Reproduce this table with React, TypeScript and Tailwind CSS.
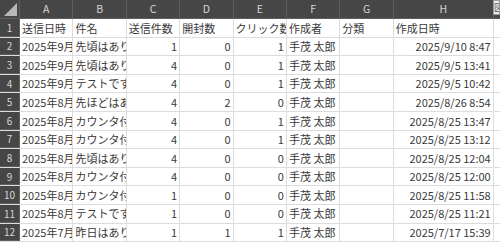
const cols = ['A', 'B', 'C', 'D', 'E', 'F', 'G', 'H'];

type Row = {
	sent: string;
	subject: string;
	count: string;
	opened: string;
	clicks: string;
	author: string;
	category: string;
	created: string;
};

const header: Row = {
	sent: '送信日時',
	subject: '件名',
	count: '送信件数',
	opened: '開封数',
	clicks: 'クリック数',
	author: '作成者',
	category: '分類',
	created: '作成日時'
};

// only the part that shows inside the narrow columns
const rows: Row[] = [
	['2025年9月', '先頃はあり', '1', '0', '1', '2025/9/10 8:47'],
	['2025年9月', '先頃はあり', '4', '0', '1', '2025/9/5 13:41'],
	['2025年9月', 'テストです', '4', '0', '1', '2025/9/5 10:42'],
	['2025年8月', '先ほどはあ', '4', '2', '0', '2025/8/26 8:54'],
	['2025年8月', 'カウンタ付', '4', '0', '1', '2025/8/25 13:47'],
	['2025年8月', 'カウンタ付', '4', '0', '1', '2025/8/25 13:12'],
	['2025年8月', '先頃はあり', '4', '0', '0', '2025/8/25 12:04'],
	['2025年8月', 'カウンタ付', '4', '0', '0', '2025/8/25 12:00'],
	['2025年8月', 'カウンタ付', '1', '0', '0', '2025/8/25 11:58'],
	['2025年8月', 'テストです', '1', '0', '0', '2025/8/25 11:21'],
	['2025年7月', '昨日はあり', '1', '1', '1', '2025/7/17 15:39']
].map(([sent, subject, count, opened, clicks, created]) => ({
	sent,
	subject,
	count,
	opened,
	clicks,
	author: '手茂 太郎',
	category: '',
	created
}));

function Cell({ text, right, wide }: { text: string; right?: boolean; wide?: boolean }) {
	return (
		<div
			className={`${wide ? 'w-[100px]' : 'w-[53.4px]'} shrink-0 h-full border-r border-[#dcdcdc] flex items-center ${right ? 'justify-end' : 'justify-start'}`}
		>
			<span className="block min-w-0 max-w-full overflow-hidden whitespace-nowrap px-[2px]">{text}</span>
		</div>
	);
}

function SheetRow({ n, row, isHeader }: { n: number; row: Row; isHeader?: boolean }) {
	const num = !isHeader;
	return (
		<div className="flex h-[18.6px] border-b border-[#dcdcdc]">
			<div className="w-[20px] shrink-0 h-full bg-[#464646] border-r border-r-[#5e5e5e] border-b border-b-[#5e5e5e] -mb-px flex items-center justify-center text-[10px] text-[#d6d6d6]">
				{n}
			</div>
			<Cell text={row.sent} />
			<Cell text={row.subject} />
			<Cell text={row.count} right={num} />
			<Cell text={row.opened} right={num} />
			<Cell text={row.clicks} right={num} />
			<Cell text={row.author} />
			<Cell text={row.category} />
			<Cell text={row.created} right={num} wide />
			<div className="flex-1" />
		</div>
	);
}

export default function App() {
	return (
		<div
			className="relative w-[500px] h-[242px] overflow-hidden bg-white text-[11px] text-[#3a3a3a]"
			style={{ fontFamily: '"Noto Sans CJK JP", "Noto Sans", sans-serif' }}
		>
			<div className="flex h-[19px] bg-[#464646] border-b border-[#5e5e5e] text-[10.5px] text-[#d6d6d6]">
				<div className="w-[20px] shrink-0 h-full border-r border-[#5e5e5e] relative">
					<svg className="absolute right-[2px] bottom-[2px]" width="13" height="13" viewBox="0 0 13 13">
						<polygon points="13,0 13,13 0,13" fill="#b9b9b9" />
					</svg>
				</div>
				{cols.map(c => (
					<div
						key={c}
						className={`${c === 'H' ? 'w-[100px]' : 'w-[53.4px]'} shrink-0 h-full border-r border-[#5e5e5e] flex items-center justify-center`}
					>
						{c}
					</div>
				))}
				<div className="flex-1" />
			</div>
			<SheetRow n={1} row={header} isHeader />
			{rows.map((r, i) => (
				<SheetRow key={i} n={i + 2} row={r} />
			))}
			<div className="absolute right-0 top-0 w-[7px] h-[15px] bg-[#ececec] border border-[#9a9a9a] overflow-hidden text-[9px] leading-[13px] text-[#555]">
				図
			</div>
		</div>
	);
}
